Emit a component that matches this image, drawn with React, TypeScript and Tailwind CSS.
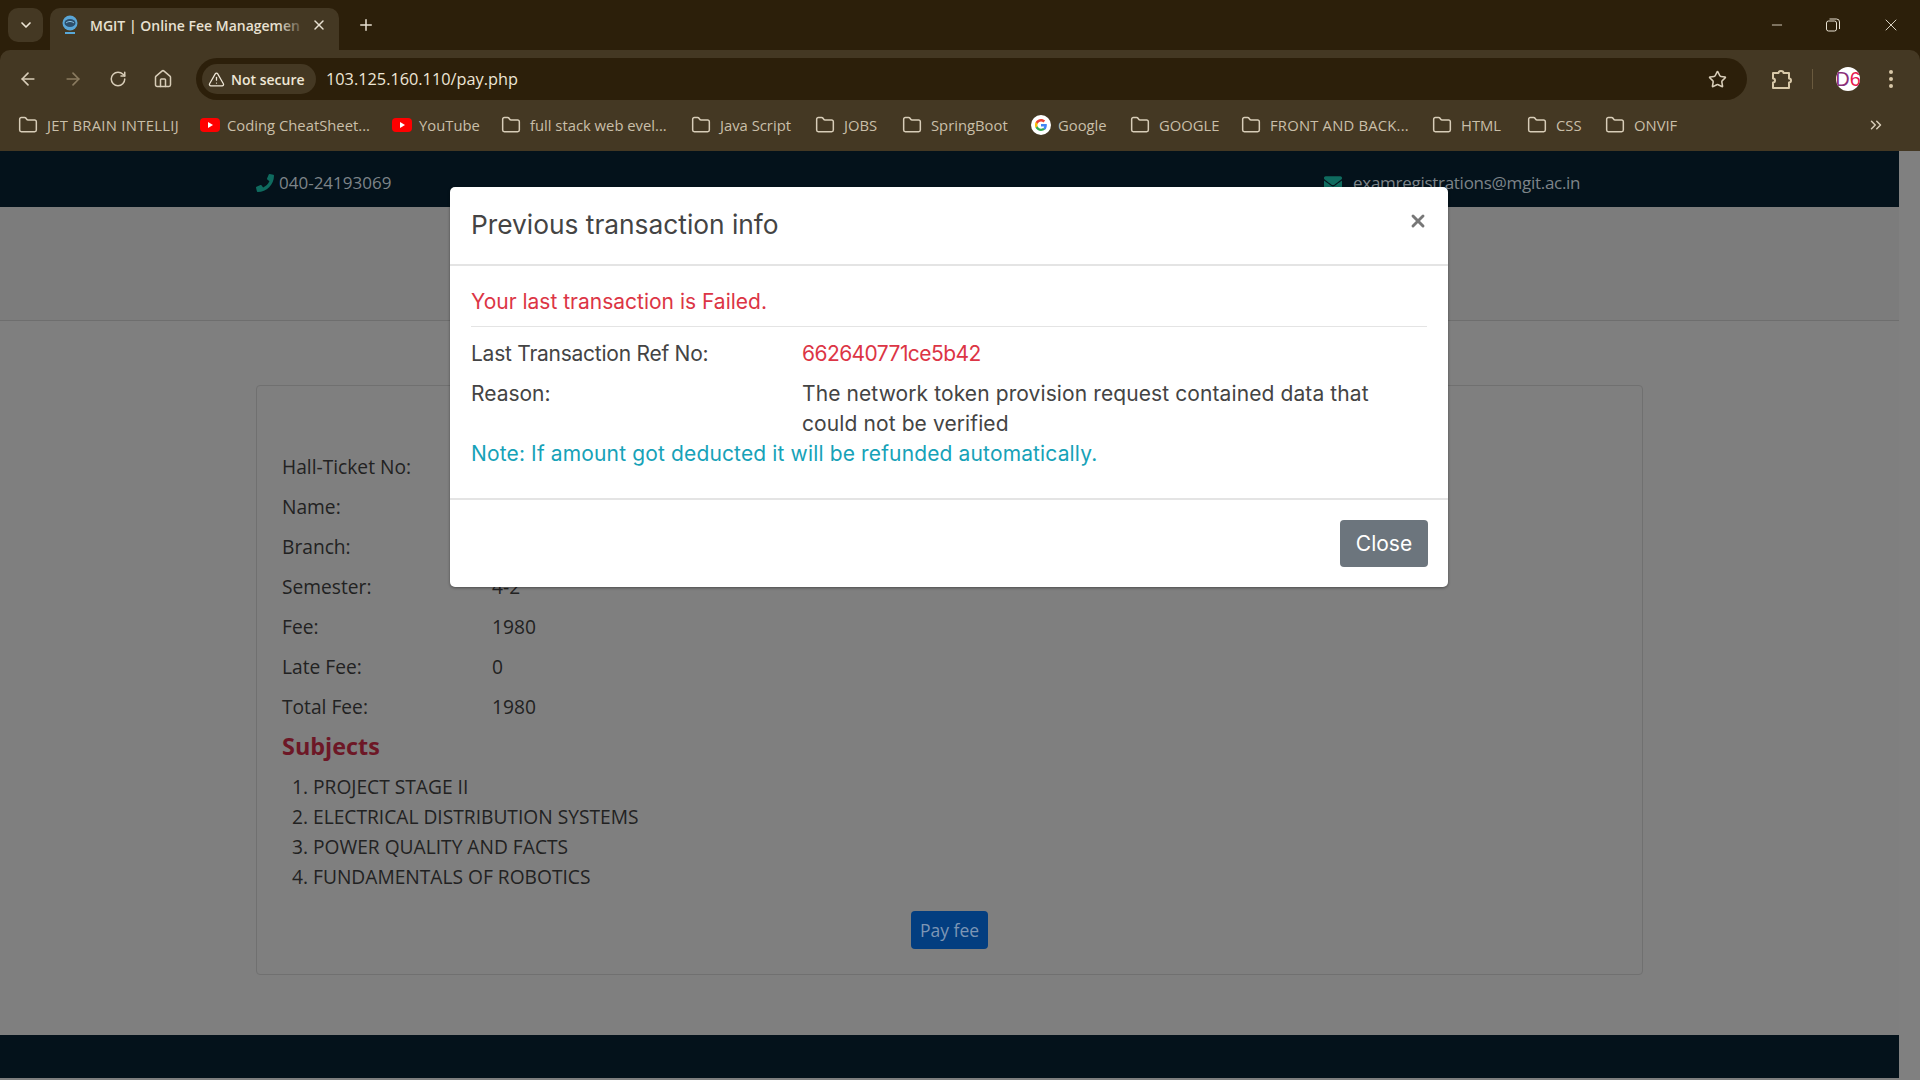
import { ArrowLeft, ArrowRight, ChevronDown, ChevronsRight, Folder, Home, Plus, RotateCw, Star, TriangleAlert, X, Minus } from "lucide-react";
import { FaEnvelope, FaPhone } from "react-icons/fa";

type Bookmark = { label: string; kind: "folder" | "youtube" | "google"; width: string; spacing?: string };

const bookmarks: Bookmark[] = [
  { label: "JET BRAIN INTELLIJ", kind: "folder", width: "w-[182px]", spacing: "tracking-[0.3px]" },
  { label: "Coding CheatSheet...", kind: "youtube", width: "w-[192px]" },
  { label: "YouTube", kind: "youtube", width: "w-[109px]" },
  { label: "full stack web evel...", kind: "folder", width: "w-[190px]" },
  { label: "Java Script", kind: "folder", width: "w-[124px]" },
  { label: "JOBS", kind: "folder", width: "w-[87px]" },
  { label: "SpringBoot", kind: "folder", width: "w-[129px]" },
  { label: "Google", kind: "google", width: "w-[99px]" },
  { label: "GOOGLE", kind: "folder", width: "w-[111px]" },
  { label: "FRONT AND BACK...", kind: "folder", width: "w-[191px]", spacing: "tracking-[0.2px]" },
  { label: "HTML", kind: "folder", width: "w-[95px]" },
  { label: "CSS", kind: "folder", width: "w-[78px]" },
  { label: "ONVIF", kind: "folder", width: "w-[90px]" },
];

const feeRows = [
  ["Hall-Ticket No:", ""],
  ["Name:", ""],
  ["Branch:", ""],
  ["Semester:", "4-2"],
  ["Fee:", "1980"],
  ["Late Fee:", "0"],
  ["Total Fee:", "1980"],
];

const subjects = ["PROJECT STAGE II", "ELECTRICAL DISTRIBUTION SYSTEMS", "POWER QUALITY AND FACTS", "FUNDAMENTALS OF ROBOTICS"];

function BookmarkIcon({ kind }: { kind: Bookmark["kind"] }) {
  if (kind === "youtube") {
    return (
      <svg width="20" height="14" viewBox="0 0 20 14" className="shrink-0">
        <rect width="20" height="14" rx="4" fill="#ff0000" />
        <path d="M8 4l5 3-5 3z" fill="#fff" />
      </svg>
    );
  }
  if (kind === "google") {
    return (
      <svg width="20" height="20" viewBox="0 0 48 48" className="shrink-0">
        <circle cx="24" cy="24" r="24" fill="#fff" />
        <path fill="#EA4335" d="M24 15.5c2.3 0 4.2.8 5.8 2.2l4.3-4.3C31.4 11 28 9.500 24 9.500c-5.700 0-10.600 3.300-13 8l5 3.900c1.200-3.500 4.400-5.900 8-5.900z" />
        <path fill="#4285F4" d="M38 24.500c0-1-.1-2-.3-3H24v5.800h7.900c-.3 1.900-1.400 3.500-3 4.500l4.800 3.700c2.800-2.600 4.300-6.400 4.300-11z" />
        <path fill="#FBBC05" d="M16 27.300c-.3-1-.5-2.100-.5-3.300s.2-2.300.5-3.300l-5-3.900C10 18.900 9.500 21.400 9.500 24s.5 5.100 1.500 7.200z" />
        <path fill="#34A853" d="M24 38.500c3.900 0 7.200-1.300 9.700-3.500l-4.800-3.700c-1.300.9-3 1.400-4.900 1.400-3.600 0-6.800-2.400-8-5.900l-5 3.900c2.400 4.700 7.300 7.800 13 7.800z" />
      </svg>
    );
  }
  return <Folder size={20} strokeWidth={1.8} className="shrink-0 text-[#d8cdb8]" />;
}

function BrowserChrome() {
  return (
    <div className="shrink-0 bg-[#2c1f0a] font-['Open_Sans',sans-serif]">
      <div className="flex h-[50px] items-end">
        <div className="mb-[8px] ml-[8px] flex h-[34px] w-[35px] items-center justify-center rounded-[10px] bg-[#443823]">
          <ChevronDown size={16} strokeWidth={2.5} className="text-[#eee6d6]" />
        </div>
        <div className="ml-[7px] flex h-[42px] w-[289px] items-center rounded-t-[10px] bg-[#443823] pr-[12px] pb-[8px] pl-[10px]">
          <svg width="20" height="20" viewBox="0 0 20 20" className="mr-[10px] shrink-0">
            <circle cx="10" cy="8" r="7.500" fill="#5aa6d6" />
            <ellipse cx="10" cy="8" rx="5.500" ry="4" fill="#2d4f6c" />
            <path d="M6 8c2-2 6-2 8 0" stroke="#8cc4e4" fill="none" />
            <rect x="5" y="17" width="10" height="2" fill="#58a8d8" />
          </svg>
          <div className="relative w-[210px]">
            <span className="block text-[14px] font-semibold whitespace-nowrap text-[#e8e1d2]">MGIT | Online Fee Managemen</span>
            <div className="absolute inset-y-0 right-[-6px] w-[28px] bg-linear-to-r from-transparent to-[#443823]" />
          </div>
          <X size={16} strokeWidth={2.2} className="ml-auto shrink-0 text-[#e8e1d2]" />
        </div>
        <Plus size={18} strokeWidth={2} className="mb-[16px] ml-[18px] text-[#e8e1d2]" />
        <div className="mb-[15px] ml-auto flex items-center text-[#e8e1d2]">
          <Minus size={16} strokeWidth={1.300} className="mr-[41px]" />
          <svg width="14" height="14" viewBox="0 0 14 14" fill="none" stroke="currentColor" className="mr-[41px]">
            <rect x="0.500" y="3" width="10" height="10" rx="2" />
            <path d="M3.500 1h7a3 3 0 0 1 3 3v7" />
          </svg>
          <X size={20} strokeWidth={1.100} className="mr-[19px]" />
        </div>
      </div>
      <div className="rounded-t-[10px] bg-[#443823] pt-[8px]">
        <div className="flex h-[42px] items-center text-[#d8cdb8]">
          <ArrowLeft size={20} strokeWidth={2} className="ml-[18px]" />
          <ArrowRight size={20} strokeWidth={2} className="ml-[25px] text-[#8a7b60]" />
          <RotateCw size={18} strokeWidth={2} className="ml-[26px]" />
          <Home size={20} strokeWidth={1.800} className="ml-[26px]" />
          <div className="ml-[23px] flex h-[42px] w-[1551px] items-center rounded-full bg-[#2c1f0a] pr-[20px] pl-[6px]">
            <div className="flex h-[30px] w-[114px] items-center gap-[6px] rounded-full bg-[#443823] pl-[6px]">
              <TriangleAlert size={17} strokeWidth={1.800} className="text-[#eee6d6]" />
              <span className="text-[14px] font-semibold whitespace-nowrap text-[#eee6d6]">Not secure</span>
            </div>
            <span className="ml-[10px] text-[16.3px] text-[#eee6d6]">103.125.160.110/pay.php</span>
            <Star size={19} strokeWidth={2} className="ml-auto text-[#d8cdb8]" />
          </div>
          <svg width="22" height="24" viewBox="0 0 22 24" fill="none" stroke="#d8c8a8" strokeWidth="2" strokeLinejoin="round" className="ml-[23px]">
            <path d="M3 6h5.500a2.500 2 0 0 1 5 0H19v5.500a2 2 0 0 1 0 4V21H3v-5.500a2 2 0 0 0 0-4z" />
          </svg>
          <div className="ml-[20px] h-[20px] w-px bg-[#6a5a3e]" />
          <div className="ml-[23px] flex h-[24px] w-[24px] items-center justify-center overflow-hidden rounded-full bg-white font-['Liberation_Sans',sans-serif] text-[20px] leading-none text-[#e6174f]">
            <span className="text-[#8a2f7a]">D</span>6
          </div>
          <div className="ml-[29px] flex flex-col gap-[3px]">
            <span className="h-[4px] w-[4px] rounded-full bg-[#d8c8a8]" />
            <span className="h-[4px] w-[4px] rounded-full bg-[#d8c8a8]" />
            <span className="h-[4px] w-[4px] rounded-full bg-[#d8c8a8]" />
          </div>
        </div>
        <div className="flex h-[51px] items-center pb-[1px] pl-[18px]">
          {bookmarks.map((b) => (
            <div key={b.label + b.kind} className={`flex items-center ${b.kind === "folder" ? "gap-[9px]" : "gap-[7px]"} ${b.width}`}>
              <BookmarkIcon kind={b.kind} />
              <span className={`text-[14.8px] font-medium whitespace-nowrap text-[#c9bfa9] ${b.spacing ?? ""}`}>{b.label}</span>
            </div>
          ))}
          <ChevronsRight size={18} strokeWidth={2} className="mr-[35px] ml-auto text-[#d8cdb8]" />
        </div>
      </div>
    </div>
  );
}

function FeePage() {
  return (
    <div className="flex h-full flex-col bg-[#7f7f7f] font-['Open_Sans',sans-serif] text-[#222222]">
      <div className="flex h-[56px] shrink-0 items-center bg-[#04121b] pt-[8px] pl-[256px] text-[#7d8489]">
        <div className="flex w-[1068px] items-center gap-[5px] text-[17px]">
          <FaPhone size={18} className="text-[#0f6b5f]" />
          <span>040-24193069</span>
        </div>
        <div className="flex items-center gap-[11px] text-[17px] tracking-[-0.28px]">
          <FaEnvelope size={18} className="text-[#0f6b5f]" />
          <span>examregistrations@mgit.ac.in</span>
        </div>
      </div>
      <div className="h-[114px] shrink-0 border-b border-[#6e6e6e] bg-[#7c7c7c]" />
      <div className="mt-[64px] ml-[256px] w-[1387px] rounded-[4px] border border-[#707070] px-[25px] pt-[61px] text-[19.2px]">
        {feeRows.map(([label, value]) => (
          <div key={label} className="flex h-[40px] items-center">
            <span className="w-[210px]">{label}</span>
            <span>{value}</span>
          </div>
        ))}
        <h3 className="flex h-[40px] items-center text-[23.4px] font-bold text-[#6d1726]">Subjects</h3>
        <ol className="mt-[5px] ml-[31px] list-decimal">
          {subjects.map((s) => (
            <li key={s} className="h-[30px] leading-[30px]">{s}</li>
          ))}
        </ol>
        <div className="mt-[19px] mb-[25px] flex justify-center">
          <button className="h-[38px] w-[77px] rounded-[4px] bg-[#033e80] text-[17.5px] text-[#7d96b5]">Pay fee</button>
        </div>
      </div>
      <div className="mt-auto h-[43px] shrink-0 bg-[#04121b]" />
      <div className="h-[2px] shrink-0 bg-[#7f7f7f]" />
    </div>
  );
}

function TransactionModal() {
  return (
    <div className="absolute top-[36px] left-[450px] w-[998px] rounded-[5px] bg-white font-['Inter',sans-serif] text-[21px] text-[#444444] shadow-[0_1px_3px_rgba(0,0,0,0.4)]">
      <div className="flex h-[79px] items-start justify-between border-b-2 border-[#e4e4e4] pr-[20px] pl-[21px]">
        <h5 className="mt-[22px] text-[26.3px] leading-[32px]">Previous transaction info</h5>
        <X size={20} strokeWidth={3.500} className="mt-[24px] text-[#777777]" />
      </div>
      <div className="h-[232px] px-[21px]">
        <p className="flex h-[61px] items-center border-b border-[#e4e4e4] pt-[12px] text-[#dc3545]">Your last transaction is Failed.</p>
        <div className="mt-[10px] flex h-[33px] items-center">
          <span className="w-[331px] tracking-[-0.25px]">Last Transaction Ref No:</span>
          <span className="tracking-[-0.57px] text-[#dc3545]">662640771ce5b42</span>
        </div>
        <div className="mt-[9px] flex leading-[30px]">
          <span className="w-[331px] shrink-0">Reason:</span>
          <span className="w-[600px] tracking-[0.1px]">The network token provision request contained data that could not be verified</span>
        </div>
        <p className="leading-[30px] tracking-[0.14px] text-[#17a2b8]">Note: If amount got deducted it will be refunded automatically.</p>
      </div>
      <div className="flex h-[89px] items-start justify-end border-t-2 border-[#e4e4e4] pt-[20px] pr-[20px]">
        <button className="h-[47px] w-[88px] rounded-[4px] bg-[#6c757d] text-white">Close</button>
      </div>
    </div>
  );
}

export default function App() {
  return (
    <div className="flex h-screen flex-col overflow-hidden">
      <BrowserChrome />
      <div className="relative flex min-h-0 flex-1">
        <div className="min-w-0 flex-1">
          <FeePage />
        </div>
        <div className="w-[21px] shrink-0 bg-[#808080]" />
        <TransactionModal />
      </div>
    </div>
  );
}
